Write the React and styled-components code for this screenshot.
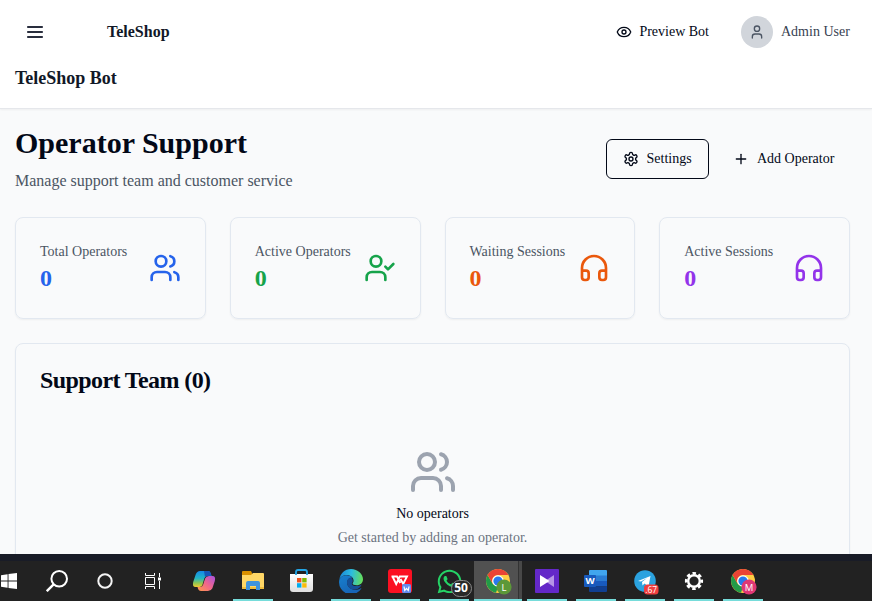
import React from "react";
import styled, { createGlobalStyle } from "styled-components";
import { Eye, Headphones, Plus, User, UserCheck, Users } from "lucide-react";
import { FaWhatsapp } from "react-icons/fa";

const GlobalStyle = createGlobalStyle`
  * { box-sizing: border-box; }
  body { margin: 0; }
  h1, h2, h3, p { margin: 0; }
  button { font: inherit; color: inherit; background: none; border: 0; padding: 0; }
  svg { display: block; flex: none; }
`;

const Screen = styled.div`
  display: flex;
  flex-direction: column;
  width: 872px;
  height: 601px;
  overflow: hidden;
  background: #f9fafb;
  color: #020817;
  font: 14px/20px "Liberation Serif", "Times New Roman", serif;
`;

const Page = styled.div`
  flex: 1;
  min-height: 0;
  overflow: hidden;
`;

const Header = styled.header`
  height: 109px;
  background: #fff;
  border-bottom: 1px solid #e5e7eb;
  box-shadow: 0 1px 2px rgba(0, 0, 0, 0.05);
  padding: 0 22px 0 15px;
`;

const HeaderRow = styled.div`
  display: flex;
  align-items: center;
  height: 64px;
`;

const MenuButton = styled.button`
  display: grid;
  place-items: center;
  width: 40px;
  height: 36px;
`;

const Brand = styled.span`
  margin-left: 52px;
  font-size: 16px;
  font-weight: 700;
  color: #111827;
`;

const HeaderActions = styled.div`
  display: flex;
  align-items: center;
  margin-left: auto;
`;

const PreviewButton = styled.button`
  display: flex;
  align-items: center;
  gap: 7px;
  margin-right: 32px;
`;

const Avatar = styled.span`
  display: grid;
  place-items: center;
  width: 32px;
  height: 32px;
  border-radius: 50%;
  background: #d1d5db;
  color: #4b5563;
`;

const UserName = styled.span`
  width: 69px;
  margin-left: 8px;
  color: #374151;
  white-space: nowrap;
`;

const BotName = styled.h2`
  font-size: 18px;
  line-height: 28px;
  color: #111827;
`;

const Main = styled.main`
  padding: 16px 22px 0 15px;
`;

const TitleRow = styled.div`
  display: flex;
  align-items: center;
  justify-content: space-between;
  height: 68px;
`;

const Title = styled.h1`
  font-size: 30px;
  line-height: 36px;
`;

const Subtitle = styled.p`
  margin-top: 8px;
  font-size: 16px;
  line-height: 24px;
  color: #4b5563;
`;

const Actions = styled.div`
  display: flex;
  gap: 8px;
`;

const ActionButton = styled.button`
  display: flex;
  align-items: center;
  gap: 8px;
  width: ${(p) => p.$width}px;
  height: 40px;
  padding: 0 16px;
  border-radius: 6px;
  white-space: nowrap;
  ${(p) => p.$outlined && "border: 1px solid #020817; gap: 7.5px;"}
`;

const Stats = styled.section`
  display: grid;
  grid-template-columns: repeat(4, 1fr);
  gap: 24px;
  margin-top: 24px;
`;

const Card = styled.section`
  border: 1px solid #e2e8f0;
  border-radius: 8px;
  box-shadow: 0 1px 2px rgba(0, 0, 0, 0.05);
  padding: 24px;
`;

const StatCard = styled(Card)`
  display: flex;
  align-items: center;
  justify-content: space-between;
  height: 102px;
  color: ${(p) => p.$color};
`;

const StatLabel = styled.p`
  color: #4b5563;
  white-space: nowrap;
`;

const StatValue = styled.p`
  font-size: 24px;
  line-height: 32px;
  font-weight: 700;
`;

const TeamCard = styled(Card)`
  margin-top: 24px;
  height: 260px;
`;

const TeamTitle = styled.h3`
  font-size: 24px;
  line-height: 24px;
  letter-spacing: -0.025em;
`;

const Empty = styled.div`
  display: flex;
  flex-direction: column;
  align-items: center;
  padding-top: 56px;
  color: #9ca3af;
`;

const EmptyTitle = styled.h3`
  margin-top: 8px;
  font-size: 14px;
  font-weight: 400;
  color: #020817;
`;

const EmptyText = styled.p`
  margin-top: 4px;
  color: #6b7280;
`;

const Taskbar = styled.footer`
  display: flex;
  flex: none;
  height: 47px;
  background: #222;
  border-top: 7px solid #191c27;
`;

const SystemGroup = styled.div`
  display: flex;
  margin-left: -15px;
  width: 195px;
`;

const SystemButton = styled.button`
  display: grid;
  place-items: center;
  width: 48px;
  height: 40px;
  &:last-child { width: 46px; }
`;

const AppButton = styled.button`
  width: 49px;
  height: 40px;
  padding: ${(p) => (p.$active ? "0 1px 0 0" : "0 5px 0 4px")};
  ${(p) => p.$active && "background: linear-gradient(90deg, #515151 44px, #333 44px, #333 45px, #484848 45px, #484848 48px, #222 48px);"}
`;

const AppFace = styled.span`
  display: grid;
  place-items: center;
  height: 40px;
  border-bottom: 2px solid ${(p) => (p.$running ? "#76dcda" : "transparent")};
  svg { margin-top: 2px; }
`;

const IconStack = styled.span`
  display: block;
  position: relative;
`;

const CountBadge = styled.span`
  position: absolute;
  left: 15px;
  top: 14px;
  width: 21px;
  height: 17px;
  border: 1px solid #8a8a8a;
  border-radius: 9px;
  background: #292929;
  color: #fff;
  font: 700 12px/14px "Open Sans", sans-serif;
  text-align: center;
`;

const MenuIcon = () => (
  <svg width="16" height="12" viewBox="0 0 16 12" fill="none" stroke="#292e3d" strokeWidth="1.8">
    <path d="M.2 1h15.600M.2 6h15.600M.2 11h15.600" />
  </svg>
);

const SettingsIcon = () => (
  <svg width="16" height="16" viewBox="0 0 24 24" fill="none" stroke="currentColor" strokeWidth="2" strokeLinecap="round" strokeLinejoin="round">
    <path d="M12.22 2h-.44a2 2 0 0 0-2 2v.18a2 2 0 0 1-1 1.73l-.43.25a2 2 0 0 1-2 0l-.15-.08a2 2 0 0 0-2.73.73l-.22.38a2 2 0 0 0 .73 2.73l.15.1a2 2 0 0 1 1 1.72v.51a2 2 0 0 1-1 1.74l-.15.09a2 2 0 0 0-.73 2.73l.22.38a2 2 0 0 0 2.73.73l.15-.08a2 2 0 0 1 2 0l.43.25a2 2 0 0 1 1 1.73V20a2 2 0 0 0 2 2h.44a2 2 0 0 0 2-2v-.18a2 2 0 0 1 1-1.73l.43-.25a2 2 0 0 1 2 0l.15.08a2 2 0 0 0 2.73-.73l.22-.39a2 2 0 0 0-.73-2.73l-.15-.08a2 2 0 0 1-1-1.74v-.5a2 2 0 0 1 1-1.74l.15-.09a2 2 0 0 0 .73-2.73l-.22-.38a2 2 0 0 0-2.73-.73l-.15.08a2 2 0 0 1-2 0l-.43-.25a2 2 0 0 1-1-1.73V4a2 2 0 0 0-2-2z" />
    <circle cx="12" cy="12" r="3" />
  </svg>
);

const WindowsIcon = () => (
  <svg width="16" height="16" viewBox="0 0 16 16" fill="#fff">
    <path d="M0 2.2 6.6 1.3V7.5H0zM7.5 1.1 16 0v7.5H7.5zM0 8.4h6.6v6.3L0 13.8zM7.5 8.4H16V16l-8.5-1.1z" />
  </svg>
);

const SearchIcon = () => (
  <svg width="22" height="22" viewBox="0 0 22 22" fill="none" stroke="#fff" strokeWidth="2">
    <circle cx="13.2" cy="8.8" r="7.8" />
    <path d="M7.6 14.4.8 21.2" strokeWidth="2.4" />
  </svg>
);

const CortanaIcon = () => (
  <svg width="16" height="16" viewBox="0 0 16 16" fill="none" stroke="#f4f4f4" strokeWidth="2">
    <circle cx="8" cy="8" r="6.7" />
  </svg>
);

const TaskViewIcon = () => (
  <svg width="17" height="16" viewBox="0 0 17 16" fill="none" stroke="#fff">
    <path d="M1.5 4.5h9v7h-9zM1.5 0v2.5h9V0M1.5 16v-2.5h9V16M15.5 0v4M15.5 8v8" />
    <path d="M14 4.5h3v3h-3z" fill="#fff" stroke="none" />
  </svg>
);

const CopilotIcon = () => (
  <svg width="24" height="24" viewBox="0 0 24 24">
    <defs>
      <linearGradient id="copA" x1="0" y1="0" x2="0" y2="1">
        <stop offset="0" stopColor="#1689e8" /><stop offset=".45" stopColor="#22b5c5" /><stop offset=".75" stopColor="#8fc552" /><stop offset="1" stopColor="#f1c930" />
      </linearGradient>
      <linearGradient id="copB" x1="1" y1="0" x2="0" y2="1">
        <stop offset="0" stopColor="#a652e0" /><stop offset=".5" stopColor="#f0668c" /><stop offset="1" stopColor="#ff9a48" />
      </linearGradient>
    </defs>
    <path d="M8 2h8q2 0 2.7 2.3L19.5 7H15q-2 0-2.7 2.5L10.4 16Q9.7 18 7.5 18H3.5Q0 18 1.2 13L3.7 5.5Q5 2 8 2Z" fill="url(#copA)" />
    <path d="M12 2h4q2 0 2.7 2.3L19.5 7H15q-1.2 0-2 1Z" fill="#1756b8" />
    <path d="M17 7h3.5Q24 7 22.8 12l-2.4 7.2Q19 22 16 22H9q-2.2 0-2.9-2l-.6-2h3q2 0 2.7-2.4l1.9-6Q14 7 17 7Z" fill="url(#copB)" />
  </svg>
);

const ExplorerIcon = () => (
  <svg width="24" height="24" viewBox="0 0 24 24">
    <path d="M1 3q0-1 1-1h8l1 2v2H1z" fill="#d99000" />
    <path d="M1 6h9l2-2h10q1 0 1 1v15H1z" fill="#ffd766" />
    <path d="M1 18h22v2H1z" fill="#f1bd3c" />
    <path d="M5 21v-7q0-2 2-2h10q2 0 2 2v7h-4v-4H9v4z" fill="#3f94dc" />
  </svg>
);

const StoreIcon = () => (
  <svg width="26" height="24" viewBox="0 0 26 24">
    <defs><linearGradient id="bag" x2="0" y2="1"><stop stopColor="#fff" /><stop offset="1" stopColor="#dedede" /></linearGradient></defs>
    <path d="M1 5h23v15q0 3-3 3H4q-3 0-3-3z" fill="url(#bag)" />
    <path d="M7 6V3q0-2 2-2h7q2 0 2 2v3" fill="none" stroke="#23a5e5" strokeWidth="1.8" />
    <path d="M8 9h4.4v4.4H8z" fill="#f1511b" /><path d="M13.2 9h4.4v4.4h-4.4z" fill="#80bb01" />
    <path d="M8 14.2h4.4v4.4H8z" fill="#00adef" /><path d="M13.2 14.2h4.4v4.4h-4.4z" fill="#fbbc09" />
  </svg>
);

const EdgeIcon = () => (
  <svg width="24" height="24" viewBox="0 0 24 24">
    <defs>
      <linearGradient id="edgeA" x1="0" y1=".3" x2="1" y2=".4"><stop stopColor="#1986d8" /><stop offset=".5" stopColor="#2cbce0" /><stop offset="1" stopColor="#65df5b" /></linearGradient>
      <linearGradient id="edgeB" x1="0" y1="0" x2=".6" y2="1"><stop stopColor="#1780cf" /><stop offset="1" stopColor="#1762b4" /></linearGradient>
    </defs>
    <path d="M.3 11C1 4.6 5.8 0 12 0c6.9 0 12 5.2 12 10.2 0 3.7-2.8 6-6.3 6-2.6 0-4.1-.8-4.1-1.7 0-.6 1-1.1 1-2.8C14.6 8.5 11.5 6 7.8 6 4.2 6 1 8.2.3 11Z" fill="url(#edgeA)" />
    <path d="M.1 12.2C.4 8.3 4 6.2 7.8 6.2c2.6 0 4.5 1 5.5 2.3-3.4.1-5.1 2.4-5.1 5.2 0 4.2 4 7.1 8.2 7.1 2 0 3.7-.6 5.4-1.6.4-.2.7.1.4.5A12 12 0 0 1 .1 12.2Z" fill="url(#edgeB)" />
    <path d="M8 13.2c0-2.5 1.600-4.400 4.300-4.700.8.8 1.500 1.900 1.500 3.200 0 1.700-1 2.200-1 3 0 1.300 2 2.400 4.900 2.400 1.900 0 3.400-.5 4.900-1.700-.7 2.600-3 4.500-6.600 5.100C11.600 21 8 17.500 8 13.200Z" fill="#164f98" />
  </svg>
);

const WpsIcon = () => (
  <svg width="24" height="24" viewBox="0 0 24 24">
    <rect width="24" height="24" rx="3" fill="#fb1022" />
    <path d="M3.500 7.500H9l3.200 6.500M4.500 7.500 8.200 15l3.600-7.500H19L15.200 15l-2.700-5" fill="none" stroke="#fff" strokeWidth="1.900" />
    <rect x="14" y="15" width="9" height="9" rx="1.500" fill="#638cf0" />
    <path d="m16 17.500.7 4 1.800-2 1.800 2 .7-4" fill="none" stroke="#fff" strokeWidth="1.200" />
  </svg>
);

const ChromeIcon = ({ letter, color }) => (
  <svg width="26" height="26" viewBox="-1 -1 26 26" overflow="visible">
    <circle cx="12" cy="12" r="12" fill="#ffce44" />
    <path d="M1.600 6 6.800 15 12 18l-2 5.800A12 12 0 0 1 1.600 6Z" fill="#229b48" />
    <path d="M1.600 6A12 12 0 0 1 22.400 6H12a6 6 0 0 0-5.200 9Z" fill="#ea4335" />
    <circle cx="12" cy="12" r="5.800" fill="#fff" />
    <circle cx="12" cy="12" r="4.600" fill="#2879ed" />
    <circle cx="18" cy="18" r="7.600" fill={color} />
    <text x="18" y="21.500" fill="#fff" fontFamily="Open Sans" fontSize="9.500" textAnchor="middle">{letter}</text>
  </svg>
);

const VideoIcon = () => (
  <svg width="24" height="24" viewBox="0 0 24 24">
    <rect width="24" height="24" rx="1" fill="#6428c8" />
    <path d="m19 6-9 6 9 6z" fill="#b695e6" /><path d="m5 6 9.500 6L5 18z" fill="#fff" />
  </svg>
);

const WordIcon = () => (
  <svg width="24" height="24" viewBox="0 0 24 24">
    <path d="M6 1h16q1 0 1 1v5H5V2q0-1 1-1z" fill="#41a5ee" /><path d="M5 6.500h18v6H5z" fill="#2b7cd3" />
    <path d="M5 12h18v5.500H5z" fill="#185abd" /><path d="M5 17.500h18v4.500q0 1-1 1H6q-1 0-1-1z" fill="#103f91" />
    <rect x="0" y="6" width="12" height="12" rx="1" fill="#185abd" />
    <text x="6" y="15.300" fill="#fff" fontFamily="Open Sans" fontWeight="700" fontSize="9.500" textAnchor="middle">W</text>
  </svg>
);

const TelegramIcon = () => (
  <svg width="26" height="26" viewBox="-1 -1 26 26" overflow="visible">
    <circle cx="12" cy="12" r="10.800" fill="#2ba2df" />
    <path d="m5 12 12.500-5-2 10.500-4-3-2 2-.5-3.500 5-4-6 3.500z" fill="#fff" />
    <rect x="11" y="15.500" width="14.500" height="10" rx="3.500" fill="#ef3e3e" />
    <text x="18.200" y="23.600" fill="#fff" fontFamily="Open Sans" fontSize="8.500" textAnchor="middle">.67</text>
  </svg>
);

const GearIcon = () => (
  <svg width="20" height="20" viewBox="0 0 20 20" fill="none" stroke="#fff">
    <circle cx="10" cy="10" r="5.800" strokeWidth="2.400" />
    <circle cx="10" cy="10" r="7.800" strokeWidth="2.600" strokeDasharray="3.463 2.663" strokeDashoffset="1.732" />
  </svg>
);

const WhatsAppIcon = () => (
  <IconStack>
    <FaWhatsapp size={27} color="#25d366" />
    <CountBadge>50</CountBadge>
  </IconStack>
);

const stats = [
  { label: "Total Operators", color: "#2563eb", Icon: Users },
  { label: "Active Operators", color: "#16a34a", Icon: UserCheck },
  { label: "Waiting Sessions", color: "#ea580c", Icon: Headphones },
  { label: "Active Sessions", color: "#9333ea", Icon: Headphones },
];

const apps = [
  { id: "copilot", icon: <CopilotIcon /> },
  { id: "explorer", icon: <ExplorerIcon />, running: true },
  { id: "store", icon: <StoreIcon /> },
  { id: "edge", icon: <EdgeIcon />, running: true },
  { id: "wps", icon: <WpsIcon />, running: true },
  { id: "whatsapp", icon: <WhatsAppIcon />, running: true },
  { id: "chrome-l", icon: <ChromeIcon letter="L" color="#5c9838" />, running: true, active: true },
  { id: "video", icon: <VideoIcon />, running: true },
  { id: "word", icon: <WordIcon />, running: true },
  { id: "telegram", icon: <TelegramIcon />, running: true },
  { id: "settings", icon: <GearIcon />, running: true },
  { id: "chrome-m", icon: <ChromeIcon letter="M" color="#df3774" />, running: true },
];

export default function App() {
  return (
    <Screen>
      <GlobalStyle />
      <Page>
        <Header>
          <HeaderRow>
            <MenuButton><MenuIcon /></MenuButton>
            <Brand>TeleShop</Brand>
            <HeaderActions>
              <PreviewButton><Eye size={16} />Preview Bot</PreviewButton>
              <Avatar><User size={16} /></Avatar>
              <UserName>Admin User</UserName>
            </HeaderActions>
          </HeaderRow>
          <BotName>TeleShop Bot</BotName>
        </Header>
        <Main>
          <TitleRow>
            <div>
              <Title>Operator Support</Title>
              <Subtitle>Manage support team and customer service</Subtitle>
            </div>
            <Actions>
              <ActionButton $outlined $width={103}><SettingsIcon />Settings</ActionButton>
              <ActionButton $width={133}><Plus size={16} />Add Operator</ActionButton>
            </Actions>
          </TitleRow>
          <Stats>
            {stats.map(({ label, color, Icon }) => (
              <StatCard key={label} $color={color}>
                <div>
                  <StatLabel>{label}</StatLabel>
                  <StatValue>0</StatValue>
                </div>
                <Icon size={32} />
              </StatCard>
            ))}
          </Stats>
          <TeamCard>
            <TeamTitle>Support Team (0)</TeamTitle>
            <Empty>
              <Users size={48} />
              <EmptyTitle>No operators</EmptyTitle>
              <EmptyText>Get started by adding an operator.</EmptyText>
            </Empty>
          </TeamCard>
        </Main>
      </Page>
      <Taskbar>
        <SystemGroup>
          <SystemButton><WindowsIcon /></SystemButton>
          <SystemButton><SearchIcon /></SystemButton>
          <SystemButton><CortanaIcon /></SystemButton>
          <SystemButton><TaskViewIcon /></SystemButton>
        </SystemGroup>
        {apps.map((app) => (
          <AppButton key={app.id} $active={app.active}>
            <AppFace $running={app.running}>{app.icon}</AppFace>
          </AppButton>
        ))}
      </Taskbar>
    </Screen>
  );
}
